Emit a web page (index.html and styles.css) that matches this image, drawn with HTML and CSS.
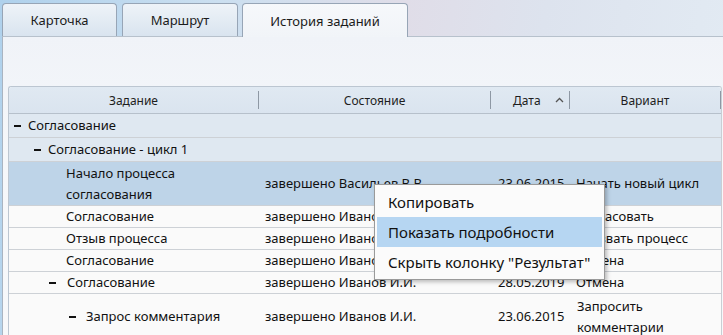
FILE: index.html
```html
<!DOCTYPE html>
<html lang="ru">
<head>
  <meta charset="UTF-8" />
  <title>История заданий</title>
  <link rel="stylesheet" href="styles.css">
</head>
<body>

<div class="window">
  <div class="tabs">
    <div class="tab tab-card">Карточка</div>
    <div class="tab tab-route">Маршрут</div>
    <div class="tab tab-history active">История заданий</div>
  </div>

  <div class="panel">
    <div class="grid">
      <div class="row head">
        <div class="hcell">Задание</div>
        <div class="hcell">Состояние</div>
        <div class="hcell sorted">Дата
          <svg class="sort" width="9" height="6" viewBox="0 0 9 6"><path d="M1 5 L4.5 1.5 L8 5" fill="none" stroke="#555" stroke-width="1.3"/></svg>
        </div>
        <div class="hcell">Вариант</div>
      </div>

      <div class="row group">
        <div class="cell task lvl1"><span class="tg"></span>Согласование</div>
        <div class="cell"></div><div class="cell"></div><div class="cell"></div>
      </div>
      <div class="row group">
        <div class="cell task lvl2"><span class="tg"></span>Согласование - цикл 1</div>
        <div class="cell"></div><div class="cell"></div><div class="cell"></div>
      </div>
      <div class="row selected">
        <div class="cell task leaf wrap">Начало процесса<br>согласования</div>
        <div class="cell">завершено Васильев В.В.</div>
        <div class="cell date">23.06.2015</div>
        <div class="cell">Начать новый цикл</div>
      </div>
      <div class="row">
        <div class="cell task leaf">Согласование</div>
        <div class="cell">завершено Иванов И.И.</div>
        <div class="cell date">23.06.2015</div>
        <div class="cell">Согласовать</div>
      </div>
      <div class="row">
        <div class="cell task leaf">Отзыв процесса</div>
        <div class="cell">завершено Иванов И.И.</div>
        <div class="cell date">23.06.2015</div>
        <div class="cell">Отозвать процесс</div>
      </div>
      <div class="row">
        <div class="cell task leaf">Согласование</div>
        <div class="cell">завершено Иванов И.И.</div>
        <div class="cell date">28.05.2019</div>
        <div class="cell">Отмена</div>
      </div>
      <div class="row">
        <div class="cell task lvl3"><span class="tg wide"></span>Согласование</div>
        <div class="cell">завершено Иванов И.И.</div>
        <div class="cell date">28.05.2019</div>
        <div class="cell">Отмена</div>
      </div>
      <div class="row tall">
        <div class="cell task lvl4"><span class="tg mid"></span>Запрос комментария</div>
        <div class="cell">завершено Иванов И.И.</div>
        <div class="cell date">23.06.2015</div>
        <div class="cell wrap">Запросить<br>комментарии</div>
      </div>
    </div>
  </div>

  <div class="menu">
    <div class="item">Копировать</div>
    <div class="item hover">Показать подробности</div>
    <div class="item">Скрыть колонку "Результат"</div>
  </div>
</div>

</body>
</html>
```

FILE: styles.css
```css
* {
  box-sizing: border-box;
}

body {
  margin: 0;
  font-family: 'Noto Sans', 'Open Sans', sans-serif;
  color: #111;
}

.window {
  position: relative;
  width: 723px;
  height: 335px;
  overflow: hidden;
  background: linear-gradient(100deg, #afd1ec 0%, #cbdff0 28%, #e0dde8 52%, #dde3ee 70%, #e3ecf4 100%);
}

.tabs {
  display: flex;
  padding: 3px 0 0 2px;
  height: 36px;
}

.tab {
  height: 33px;
  margin-right: 5px;
  border: 1px solid #97a5b6;
  border-bottom: none;
  border-radius: 4px 4px 0 0;
  background: linear-gradient(#eef3f8, #d9e4ef);
  font-size: 13px;
  color: #1b1b1b;
  display: flex;
  align-items: center;
  justify-content: center;
}

.tab-card { width: 115px; }
.tab-route { width: 116px; margin-right: 4px; }
.tab-history { width: 166px; }

.tab.active {
  height: 34px;
  background: linear-gradient(#f6f8fb, #f1f4f8);
  position: relative;
  z-index: 2;
}

.panel {
  margin-left: 2px;
  height: 299px;
  border-left: 1px solid #a9b4c1;
  border-top: 1px solid #b7c1cc;
  background: linear-gradient(#f0f3f8, #f5f7fa 40%, #f7f8fa);
  padding: 49px 0 0 5px;
}

.grid {
  width: 714px;
  border: 1px solid #bcc6d1;
  border-right-color: #c9ced4;
  border-radius: 3px 3px 0 0;
  background: #fafafa;
  font-size: 13px;
}

.row {
  display: grid;
  grid-template-columns: 250px 232px 79px 151px;
  border-bottom: 1px solid #cdd1d6;
  min-height: 22px;
}

.row.head {
  height: 27px;
  background: linear-gradient(#e0e9f2, #dae4ef);
  border-bottom: 1px solid #b6c0cb;
  border-radius: 3px 3px 0 0;
}

.hcell {
  display: flex;
  align-items: center;
  justify-content: center;
  font-size: 12px;
  color: #1e1e1e;
  border-right: 1px solid #8e98a4;
  margin: 4px 0;
}

.hcell.sorted {
  justify-content: flex-start;
  padding-left: 22px;
}

.sort {
  margin-left: 14px;
}

.row.group {
  min-height: 24px;
  background: #dfe8f1;
}

.row.selected {
  min-height: 43px;
  background: #bed4e8;
}

.row.tall {
  min-height: 46px;
}

.cell {
  display: flex;
  align-items: center;
  padding-left: 6px;
  white-space: nowrap;
  line-height: 21px;
}

.cell.date {
  padding-left: 7px;
}

.cell.wrap {
  padding-left: 7px;
  padding-top: 1px;
}

.cell.task.wrap {
  padding-left: 57px;
}

.task.lvl1 { padding-left: 5px; }
.task.lvl2 { padding-left: 25px; }
.task.lvl3 { padding-left: 40px; }
.task.lvl4 { padding-left: 60px; }
.task.leaf { padding-left: 57px; }

.tg {
  display: inline-block;
  width: 7px;
  height: 2px;
  background: #111;
  margin-right: 7px;
}

.tg.wide { margin-right: 11px; }
.tg.mid { margin-right: 10px; }

.menu {
  position: absolute;
  left: 374px;
  top: 184px;
  width: 231px;
  padding: 2px;
  background: #fbfbfb;
  border: 1px solid #9a9a9a;
  box-shadow: 2px 2px 4px rgba(0, 0, 0, 0.25);
  font-size: 15px;
  z-index: 5;
}

.item {
  height: 30px;
  padding-left: 11px;
  display: flex;
  align-items: center;
  color: #111;
  white-space: nowrap;
}

.item.hover {
  background: #b6d6f2;
}
```
